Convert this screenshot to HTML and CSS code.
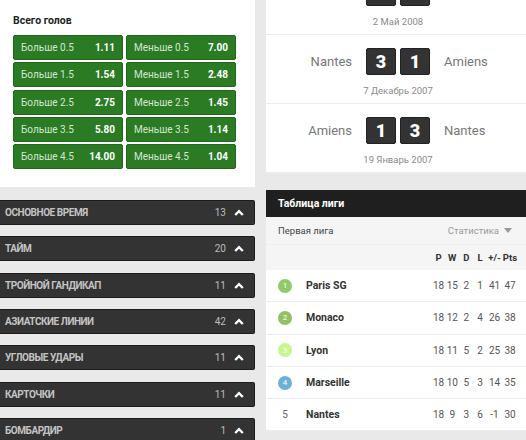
FILE: index.html
```html
<!DOCTYPE html>
<html lang="ru">
<head>
<meta charset="utf-8">
<title>Матч</title>
<link rel="stylesheet" href="styles.css">
</head>
<body>
<div class="page">
  <div class="col col-left">
    <section class="card goals">
      <h3 class="goals-title">Всего голов</h3>
      <div class="odds-grid">
        <div class="odd"><span class="odd-label">Больше 0.5</span><b class="odd-value">1.11</b></div>
        <div class="odd"><span class="odd-label">Меньше 0.5</span><b class="odd-value">7.00</b></div>
        <div class="odd"><span class="odd-label">Больше 1.5</span><b class="odd-value">1.54</b></div>
        <div class="odd"><span class="odd-label">Меньше 1.5</span><b class="odd-value">2.48</b></div>
        <div class="odd"><span class="odd-label">Больше 2.5</span><b class="odd-value">2.75</b></div>
        <div class="odd"><span class="odd-label">Меньше 2.5</span><b class="odd-value">1.45</b></div>
        <div class="odd"><span class="odd-label">Больше 3.5</span><b class="odd-value">5.80</b></div>
        <div class="odd"><span class="odd-label">Меньше 3.5</span><b class="odd-value">1.14</b></div>
        <div class="odd"><span class="odd-label">Больше 4.5</span><b class="odd-value">14.00</b></div>
        <div class="odd"><span class="odd-label">Меньше 4.5</span><b class="odd-value">1.04</b></div>
      </div>
    </section>

    <div class="markets">
      <div class="market"><span class="market-name">Основное время</span><span class="market-count">13</span><svg class="chev" viewBox="0 0 10 7" width="10" height="7"><path d="M1.2 6 L5 2.2 L8.8 6" /></svg></div>
      <div class="market"><span class="market-name">Тайм</span><span class="market-count">20</span><svg class="chev" viewBox="0 0 10 7" width="10" height="7"><path d="M1.2 6 L5 2.2 L8.8 6" /></svg></div>
      <div class="market"><span class="market-name">Тройной гандикап</span><span class="market-count">11</span><svg class="chev" viewBox="0 0 10 7" width="10" height="7"><path d="M1.2 6 L5 2.2 L8.8 6" /></svg></div>
      <div class="market"><span class="market-name">Азиатские линии</span><span class="market-count">42</span><svg class="chev" viewBox="0 0 10 7" width="10" height="7"><path d="M1.2 6 L5 2.2 L8.8 6" /></svg></div>
      <div class="market"><span class="market-name">Угловые удары</span><span class="market-count">11</span><svg class="chev" viewBox="0 0 10 7" width="10" height="7"><path d="M1.2 6 L5 2.2 L8.8 6" /></svg></div>
      <div class="market"><span class="market-name">Карточки</span><span class="market-count">11</span><svg class="chev" viewBox="0 0 10 7" width="10" height="7"><path d="M1.2 6 L5 2.2 L8.8 6" /></svg></div>
      <div class="market"><span class="market-name">Бомбардир</span><span class="market-count">1</span><svg class="chev" viewBox="0 0 10 7" width="10" height="7"><path d="M1.2 6 L5 2.2 L8.8 6" /></svg></div>
    </div>
  </div>

  <div class="col col-right">
    <section class="card matches">
      <div class="match match-first">
        <div class="match-line">
          <span class="team team-home"></span>
          <span class="scores"><span class="score"></span><span class="score"></span></span>
          <span class="team team-away"></span>
        </div>
        <div class="match-date">2 Май 2008</div>
      </div>
      <div class="match">
        <div class="match-line">
          <span class="team team-home">Nantes</span>
          <span class="scores"><span class="score">3</span><span class="score">1</span></span>
          <span class="team team-away">Amiens</span>
        </div>
        <div class="match-date">7 Декабрь 2007</div>
      </div>
      <div class="match">
        <div class="match-line">
          <span class="team team-home">Amiens</span>
          <span class="scores"><span class="score">1</span><span class="score">3</span></span>
          <span class="team team-away">Nantes</span>
        </div>
        <div class="match-date">19 Январь 2007</div>
      </div>
    </section>

    <section class="league">
      <div class="league-head">Таблица лиги</div>
      <div class="league-sub">
        <span class="league-name">Первая лига</span>
        <span class="league-stats">Статистика <svg class="tri" viewBox="0 0 8 5" width="8" height="5"><path d="M0 0 H8 L4 5 Z"/></svg></span>
      </div>
      <div class="league-row league-cols">
        <span class="pos"></span>
        <span class="club"></span>
        <span class="stats"><span>P</span><span>W</span><span>D</span><span>L</span><span>+/-</span><span>Pts</span></span>
      </div>
      <div class="league-row">
        <span class="pos pos-1">1</span>
        <span class="club">Paris SG</span>
        <span class="stats"><span>18</span><span>15</span><span>2</span><span>1</span><span>41</span><span>47</span></span>
      </div>
      <div class="league-row">
        <span class="pos pos-2">2</span>
        <span class="club">Monaco</span>
        <span class="stats"><span>18</span><span>12</span><span>2</span><span>4</span><span>26</span><span>38</span></span>
      </div>
      <div class="league-row">
        <span class="pos pos-3">3</span>
        <span class="club">Lyon</span>
        <span class="stats"><span>18</span><span>11</span><span>5</span><span>2</span><span>25</span><span>38</span></span>
      </div>
      <div class="league-row">
        <span class="pos pos-4">4</span>
        <span class="club">Marseille</span>
        <span class="stats"><span>18</span><span>10</span><span>5</span><span>3</span><span>14</span><span>35</span></span>
      </div>
      <div class="league-row">
        <span class="pos pos-plain">5</span>
        <span class="club">Nantes</span>
        <span class="stats"><span>18</span><span>9</span><span>3</span><span>6</span><span>-1</span><span>30</span></span>
      </div>
    </section>
  </div>
</div>
</body>
</html>
```

FILE: styles.css
```css
* { box-sizing: border-box; }

html, body {
  margin: 0;
  padding: 0;
  background: #e9e9e9;
  font-family: Roboto, "Liberation Sans", Arial, sans-serif;
  overflow: hidden;
}

.page {
  width: 526px;
  height: 440px;
  display: grid;
  grid-template-columns: 255px 260px;
  column-gap: 11px;
  align-items: start;
  overflow: hidden;
}

.col { display: flex; flex-direction: column; }

/* ---------- left: total goals ---------- */
.card { background: #fff; }

.goals {
  height: 187px;
  padding: 14px 0 0 13px;
}

.goals-title {
  margin: 0 0 7px 0;
  font-size: 10.5px;
  line-height: 14px;
  font-weight: 700;
  color: #222;
}

.odds-grid {
  display: grid;
  grid-template-columns: 110px 110px;
  grid-auto-rows: 25px;
  column-gap: 3px;
  row-gap: 2.3px;
}

.odd {
  display: flex;
  align-items: center;
  justify-content: space-between;
  padding: 0 7px;
  background: #2b7a24;
  border: 1px solid #22661c;
  border-radius: 2px;
  font-size: 10px;
}

.odd-label { color: #d6e6d2; }
.odd-value { color: #fff; font-weight: 700; }

/* ---------- left: markets ---------- */
.markets {
  margin-top: 13px;
  display: flex;
  flex-direction: column;
  gap: 11.33px;
}

.market {
  height: 25px;
  display: flex;
  align-items: center;
  padding: 0 10px 0 5px;
  background: #333;
  border: 1px solid #1c1c1c;
  border-left: none;
  border-radius: 0 2px 2px 0;
}

.market-name {
  flex: 1;
  text-transform: uppercase;
  font-size: 10px;
  font-weight: 700;
  letter-spacing: -0.45px;
  color: #c4c4c4;
}

.market-count {
  font-size: 10px;
  color: #bdbdbd;
  margin-right: 8px;
}

.chev {
  display: block;
  fill: none;
  stroke: #fff;
  stroke-width: 2.4;
  stroke-linecap: butt;
  stroke-linejoin: miter;
}

/* ---------- right: matches ---------- */
.matches {
  height: 173px;
  overflow: hidden;
}

.match {
  height: 69px;
  padding: 13px 0 0 0;
  border-bottom: 1px solid #ececec;
}

.match-first { margin-top: -34px; }

.match-line {
  display: grid;
  grid-template-columns: 1fr auto 1fr;
  align-items: center;
  column-gap: 14px;
  padding-left: 4px;
}

.team {
  font-size: 13px;
  color: #777;
}

.team-home { text-align: right; }
.team-away { text-align: left; }

.scores { display: flex; gap: 4px; }

.score {
  width: 30px;
  height: 27px;
  display: flex;
  align-items: center;
  justify-content: center;
  background: #333;
  border: 1px solid #222;
  border-radius: 2px;
  color: #fff;
  font-size: 18px;
  font-weight: 900;
}

.match-date {
  margin-top: 10px;
  padding-left: 4px;
  text-align: center;
  font-size: 9.5px;
  line-height: 11px;
  color: #8a8a8a;
}

/* ---------- right: league table ---------- */
.league {
  margin-top: 17px;
  background: #fff;
}

.league-head {
  height: 27px;
  display: flex;
  align-items: center;
  padding-left: 12px;
  background: #1f1f1f;
  color: #fff;
  font-size: 10.5px;
  font-weight: 700;
}

.league-sub {
  height: 28px;
  display: flex;
  align-items: center;
  justify-content: space-between;
  padding: 0 14px 0 12px;
  background: #f5f5f5;
  border-bottom: 1px solid #efefef;
  font-size: 9.5px;
}

.league-name { color: #444; }

.league-stats {
  display: flex;
  align-items: center;
  gap: 5px;
  color: #9a9a9a;
  font-size: 9.5px;
}

.tri { display: block; fill: #9a9a9a; }

.league-row {
  height: 32.3px;
  display: flex;
  align-items: center;
  padding: 0 8px 0 12px;
  border-bottom: 1px solid #ededed;
  background: #fff;
}

.league-cols {
  height: 25px;
  background: #f5f5f5;
  border-bottom: none;
  font-weight: 700;
  font-size: 9.5px;
  color: #333;
}

.pos {
  width: 14px;
  height: 14px;
  border-radius: 50%;
  display: flex;
  align-items: center;
  justify-content: center;
  font-size: 8px;
  color: #fff;
}

.pos-1 { background: #8fca6b; }
.pos-2 { background: #93c061; }
.pos-3 { background: #c6f78d; }
.pos-4 { background: #6cb0d8; }
.pos-plain { color: #666; font-size: 10px; }

.club {
  flex: 1;
  margin-left: 14px;
  font-size: 10.5px;
  font-weight: 700;
  color: #333;
}

.stats {
  display: grid;
  grid-template-columns: 13px 14.5px 13.5px 14px 15px 16px;
  text-align: center;
}

.league-row:not(.league-cols) .stats {
  font-size: 10px;
  color: #555;
}
```
